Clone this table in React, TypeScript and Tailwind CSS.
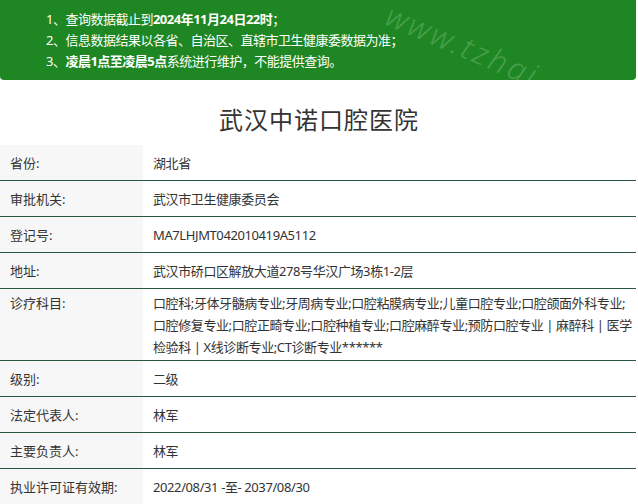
const rows: { label: string; value: React.ReactNode; multi?: boolean }[] = [
  { label: "省份:", value: "湖北省" },
  { label: "审批机关:", value: "武汉市卫生健康委员会" },
  { label: "登记号:", value: "MA7LHJMT042010419A5112" },
  { label: "地址:", value: "武汉市硚口区解放大道278号华汉广场3栋1-2层" },
  {
    label: "诊疗科目:",
    multi: true,
    value: (
      <>
        <span className="block whitespace-nowrap">口腔科;牙体牙髓病专业;牙周病专业;口腔粘膜病专业;儿童口腔专业;口腔颌面外科专业;</span>
        <span className="block whitespace-nowrap">口腔修复专业;口腔正畸专业;口腔种植专业;口腔麻醉专业;预防口腔专业 | 麻醉科 | 医学</span>
        <span className="block whitespace-nowrap">检验科 | X线诊断专业;CT诊断专业******</span>
      </>
    ),
  },
  { label: "级别:", value: "二级" },
  { label: "法定代表人:", value: "林军" },
  { label: "主要负责人:", value: "林军" },
  { label: "执业许可证有效期:", value: "2022/08/31 -至- 2037/08/30" },
]

export default function App() {
  return (
    <div
      className="relative w-[638px] h-[504px] overflow-hidden bg-white text-[#333] text-[13px]"
      style={{ fontFamily: '"Noto Sans", "Noto Sans CJK SC", sans-serif' }}
    >
      <div className="w-[636px] bg-[#1e8723] rounded-b-[4px] pt-[9px] pb-[8px] pl-[46px] text-white leading-[21px] tracking-[-0.5px]">
        <p>1、查询数据截止到<b>2024年11月24日22时</b>；</p>
        <p>2、信息数据结果以各省、自治区、直辖市卫生健康委数据为准；</p>
        <p>3、<b>凌晨1点至凌晨5点</b>系统进行维护，不能提供查询。</p>
      </div>

      <h1 className="h-[65px] pt-[15px] flex items-center justify-center text-[24px] text-[#333] tracking-[1px]">
        武汉中诺口腔医院
      </h1>

      <div className="w-[636px]">
        {rows.map((r) => (
          <div key={r.label} className="flex border-b border-[#26573c] leading-[22px]">
            <div
              className={
                r.multi
                  ? "w-[143px] shrink-0 bg-[#f7f7f7] px-[10px] pt-[3px] pb-[2px]"
                  : "w-[143px] shrink-0 bg-[#f7f7f7] px-[10px] min-h-[35px] flex items-center"
              }
            >
              {r.label}
            </div>
            <div
              className={
                r.multi
                  ? "flex-1 px-[10px] pt-[3px] pb-[2px] tracking-[-0.4px]"
                  : "flex-1 px-[10px] min-h-[35px] flex items-center tracking-[-0.4px]"
              }
            >
              {r.value}
            </div>
          </div>
        ))}
      </div>

      <span className="absolute left-[388px] top-[-10px] origin-left rotate-[23deg] text-[31px] italic font-light text-white/20 tracking-[3px] pointer-events-none">
        www.tzhgj.com
      </span>
    </div>
  )
}
